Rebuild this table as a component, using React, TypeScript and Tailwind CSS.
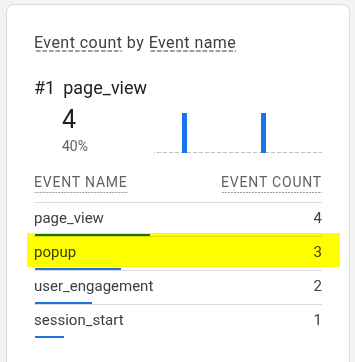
const rows = [
  { name: "page_view", count: 4 },
  { name: "popup", count: 3 },
  { name: "user_engagement", count: 2 },
  { name: "session_start", count: 1 },
];

const total = rows.reduce((s, r) => s + r.count, 0);

export default function App() {
  return (
    <div className="h-[362px] w-[355px] overflow-hidden bg-[#f1f3f4] pl-[6px] pr-[5px] pt-[4px] font-['Roboto',sans-serif]">
      <div className="relative h-[400px] rounded-[8px] border border-[#dadce0] bg-white px-[27px] pt-[28px]">
        {/* card title */}
        <div className="text-[16px] leading-[20px] tracking-[0.45px] text-[#3c4043]">
          <span className="bg-[linear-gradient(90deg,#9aa0a6_5px,transparent_5px)] bg-[length:6.5px_2px] bg-bottom bg-repeat-x">
            Event count
          </span>{" "}
          by{" "}
          <span className="bg-[linear-gradient(90deg,#9aa0a6_5px,transparent_5px)] bg-[length:6.5px_2px] bg-bottom bg-repeat-x">
            Event name
          </span>
        </div>

        <div className="mt-[23px] flex gap-[8px] text-[18px] leading-[24px] text-[#202124]">
          <span>#1</span>
          <span>page_view</span>
        </div>

        {/* top value + sparkline */}
        <div className="flex">
          <div className="w-[120px] pl-[28px] pt-[5px]">
            <div className="text-[25px] leading-[30px] text-[#202124]">4</div>
            <div className="mt-[3px] text-[14px] leading-[16px] text-[#5f6368]">40%</div>
          </div>
          <div className="mt-[13px] flex h-[40px] w-[168px] items-end bg-[linear-gradient(90deg,#bdc1c6_4px,transparent_4px)] bg-[length:6px_1px] bg-bottom bg-repeat-x pl-[28px]">
            <div className="h-[40px] w-[5px] bg-[#1a73e8]" />
            <div className="ml-[74px] h-[40px] w-[5px] bg-[#1a73e8]" />
          </div>
        </div>

        <div className="mt-[20px] flex justify-between text-[14px] uppercase leading-[16px] tracking-[0.8px] text-[#5f6368]">
          <span className="bg-[linear-gradient(90deg,#9aa0a6_2px,transparent_2px)] bg-[length:3px_1px] bg-bottom bg-repeat-x pb-[3px]">
            Event name
          </span>
          <span className="bg-[linear-gradient(90deg,#9aa0a6_2px,transparent_2px)] bg-[length:3px_1px] bg-bottom bg-repeat-x pb-[3px]">
            Event count
          </span>
        </div>

        <div className="mt-[9px]">
          {rows.map((r) => (
            <div key={r.name} className="border-t border-[#dadce0]">
              <div className="flex h-[31px] items-center justify-between text-[15px] text-[#3c4043]">
                <span>{r.name}</span>
                <span>{r.count}</span>
              </div>
              <div className="h-[2px] pl-[1px]">
                <div className="h-full bg-[#1a73e8]" style={{ width: `${(r.count / total) * 100}%` }} />
              </div>
            </div>
          ))}
        </div>

        {/* highlight over the popup row */}
        <div className="pointer-events-none absolute left-[20px] top-[228px] h-[34px] w-[313px] bg-[#ffff00] mix-blend-multiply" />
      </div>
    </div>
  );
}
